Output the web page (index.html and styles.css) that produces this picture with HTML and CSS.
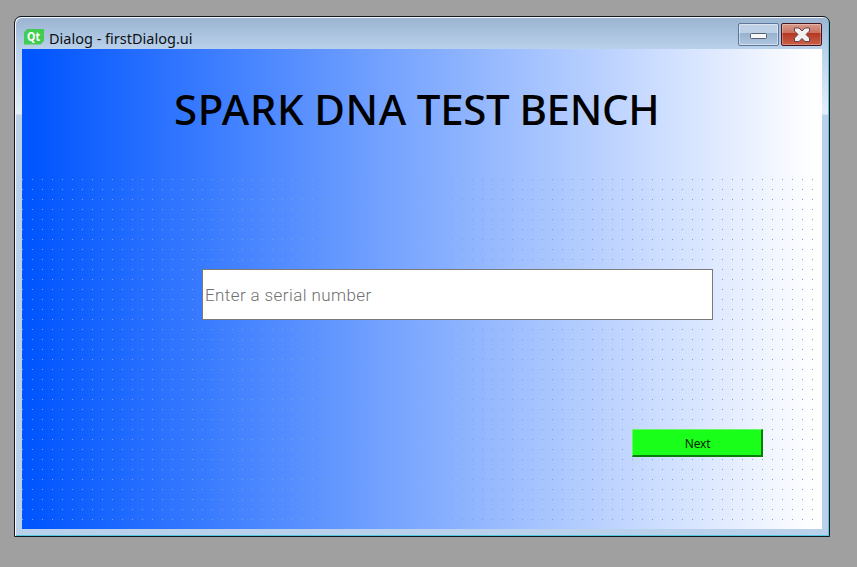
FILE: index.html
```html
<!DOCTYPE html>
<html lang="en">
<head>
<meta charset="utf-8">
<title>Dialog - firstDialog.ui</title>
<link rel="stylesheet" href="styles.css">
</head>
<body>
<div class="window">
  <div class="titlebar">
    <svg class="logo" width="20" height="16" viewBox="0 0 20 16"><path d="M3 0H20V12L16.500 15.500H0V3.500Z" fill="#41cd52"/><text x="3" y="12" class="logo-text" textLength="13" lengthAdjust="spacingAndGlyphs">Qt</text></svg>
    <span class="caption">Dialog - firstDialog.ui</span>
    <button class="control minimize" aria-label="Minimize"><svg width="18" height="6"><rect x=".5" y=".5" width="16" height="5" rx="1" fill="#f7f7f7" stroke="#53606f"/></svg></button>
    <button class="control close" aria-label="Close"><svg width="18" height="16" viewBox="0 0 18 16"><path d="M1.500 1H6L9 4L12 1H16.500V4L13 7.500L16.500 11V14.500H12L9 11.500L6 14.500H1.500V11L5 7.500L1.500 4Z" fill="#f2f2f2" stroke="#64424a" stroke-linejoin="round"/></svg></button>
  </div>
  <main class="content">
    <h1 class="heading"><span class="wide">SPARK DNA</span> TEST BENCH</h1>
    <div class="form">
      <input class="serial" type="text" placeholder="Enter a serial number">
      <button class="next">Next</button>
    </div>
  </main>
</div>
</body>
</html>
```
FILE: styles.css
```css
* { box-sizing: border-box; }
body { margin: 0; height: 567px; padding: 16px 27px 30px 14px; background: #a0a0a0; overflow: hidden; }
.window {
  width: 816px; height: 521px; padding: 0 6px;
  border: 1px solid #101820; border-radius: 7px 7px 0 0;
  background: linear-gradient(#9ab3d0 0, #b9d1ea 32px, #e3eefa 97px, #b9d1ea 98px, #b9d1ea 100%);
  box-shadow: inset 1px 1px #f4f8fc, inset -1px -1px #55c8e0;
}
.titlebar { display: flex; align-items: flex-start; height: 32px; margin: 0 1px; }
.logo { margin: 12px 0 0 2px; }
.logo-text { font: bold 12px "Noto Sans", sans-serif; fill: #fff; }
.caption { flex: 1; margin: 11px 0 0 5px; font: 14.5px/20px "Noto Sans", sans-serif; color: #0c1016; white-space: nowrap; }
.control { width: 41px; height: 23px; margin: 6px 0 0 2px; padding: 0; display: flex; align-items: center; justify-content: center; border: 1px solid #5d7699; border-radius: 2px; box-shadow: inset 0 0 0 1px #ffffff70; }
.minimize { background: linear-gradient(#bed0e5 0 43%, #98b1ce 44%, #aec6df); padding-top: 2px; }
.close { border-color: #43151f; background: linear-gradient(#d99b8c 0, #cb705e 43%, #b63721 44%, #ca6049); box-shadow: inset 0 0 0 1px #ffffff48; }
.content { width: 800px; height: 480px; margin-left: 1px; background: linear-gradient(90deg, #05f 1%, #fff 99%); }
.heading { height: 130px; margin: 0; padding-left: 152px; font: 500 42px/120px "Noto Sans", sans-serif; letter-spacing: -.3px; word-spacing: -.6px; color: #000; white-space: nowrap; }
.wide { letter-spacing: .6px; word-spacing: -1.5px; }
.form {
  display: flex; flex-direction: column; height: 350px; padding: 90px 59px 0 180px;
  background: conic-gradient(from 270deg at 1px 1px, #80a1da 90deg, transparent 0) 0 0 / 10px 10px;
}
.serial { width: 511px; height: 51px; margin: 0; padding: 0 0 0 2px; border: 1px solid #7a7a7a; border-radius: 0; background: #fff; font: 300 17px Roboto, sans-serif; letter-spacing: .4px; }
.serial::placeholder { color: #707070; opacity: 1; }
.next { width: 131px; height: 28px; margin: 109px 0 0 auto; padding: 1px 0 0 1px; border: solid; border-width: 1px 2px 2px 1px; border-color: #65f565 #087d08 #087d08 #65f565; background: #1aff1a; color: #082808; font: 12px "Noto Sans", sans-serif; letter-spacing: -.2px; }
```
